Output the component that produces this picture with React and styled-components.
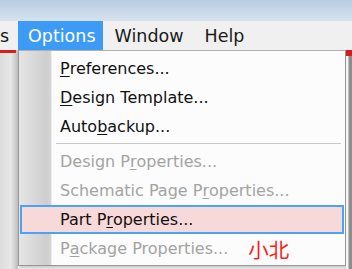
import React from 'react';
import styled, { createGlobalStyle } from 'styled-components';

const GlobalStyle = createGlobalStyle`
  html, body { margin: 0; padding: 0; background: #f0f0f0; }
  body { font-family: "DejaVu Sans", "Noto Sans CJK SC", sans-serif; }
`;

const items = [
  { label: 'Preferences...', key: 0, disabled: false },
  { label: 'Design Template...', key: 0, disabled: false },
  { label: 'Autobackup...', key: 4, disabled: false },
  { sep: true },
  { label: 'Design Properties...', key: 8, disabled: true },
  { label: 'Schematic Page Properties...', key: 16, disabled: true },
  { label: 'Part Properties...', key: 6, disabled: false, active: true },
  { label: 'Package Properties...', key: 1, disabled: true, note: '小北' },
];

const App = () => (
  <>
    <GlobalStyle />
    <Screen>
      <TitleStrip />
      <MenuBar>
        <Stub>s</Stub>
        <BarItem open>Options</BarItem>
        <BarItem>Window</BarItem>
        <BarItem>Help</BarItem>
      </MenuBar>
      <Body>
        <LeftPane>
          <RedLine />
        </LeftPane>
        <Menu>
          {items.map((it, i) =>
            it.sep ? (
              <Separator key={i} />
            ) : (
              <Item key={i} disabled={it.disabled} active={it.active}>
                {it.label.slice(0, it.key)}
                <u>{it.label[it.key]}</u>
                {it.label.slice(it.key + 1)}
                {it.note && <Note>{it.note}</Note>}
              </Item>
            )
          )}
        </Menu>
        <RightEdge />
      </Body>
    </Screen>
  </>
);

const Screen = styled.div`
  width: 352px;
  height: 269px;
  display: flex;
  flex-direction: column;
  overflow: hidden;
  background: #f0f0f0;
`;

const TitleStrip = styled.div`
  height: 21px;
  background: linear-gradient(180deg, #b9cde2, #d6e2ee);
`;

const MenuBar = styled.div`
  height: 29px;
  display: flex;
  align-items: stretch;
  background: #f0f0f0;
  font-size: 17.5px;
`;

const Stub = styled.div`
  width: 18px;
  display: flex;
  align-items: center;
  color: #1a1a1a;
`;

const BarItem = styled.div`
  display: flex;
  align-items: center;
  padding: ${({ open }) => (open ? '0 7px 0 10px' : '0 9px 0 12px')};
  background: ${({ open }) => (open ? '#3d9bf5' : 'transparent')};
  color: ${({ open }) => (open ? '#ffffff' : '#1a1a1a')};
`;

const Body = styled.div`
  flex: 1;
  display: flex;
`;

const LeftPane = styled.div`
  width: 18px;
  background: linear-gradient(90deg, #dcdcdc, #e8e8e8 60%, #bdbdbd);
`;

const RedLine = styled.div`
  height: 3px;
  width: 16px;
  background: #d81e1e;
`;

const Menu = styled.div`
  flex: 1;
  border: 1px solid #979797;
  border-top-color: #b0b0b0;
  margin-bottom: 3px;
  padding: 3px 0 2px;
  background: linear-gradient(
    90deg,
    #e6e6e6 0,
    #cdcdcd 28px,
    #d6d6d6 32px,
    #ffffff 33px,
    #fcfcfc 34px
  );
  box-shadow: 2px 2px 2px rgba(0, 0, 0, 0.15);
`;

const Item = styled.div`
  height: 29px;
  box-sizing: border-box;
  display: flex;
  align-items: center;
  padding-left: 38px;
  margin: 0 1px;
  font-size: 16px;
  white-space: nowrap;
  color: ${({ disabled }) => (disabled ? '#a3a3a3' : '#111111')};
  background: ${({ active }) => (active ? '#f8d9d9' : 'transparent')};
  border: 2px solid ${({ active }) => (active ? '#4aa3f7' : 'transparent')};

  u {
    text-decoration-thickness: 1px;
    text-underline-offset: 2px;
  }
`;

const Note = styled.span`
  margin-left: 20px;
  color: #ff1a1a;
  font-size: 20.5px;
  font-family: "Noto Sans CJK SC", sans-serif;
`;

const Separator = styled.div`
  height: 1px;
  margin: 2px 4px 3px 37px;
  background: #c8c8c8;
`;

const RightEdge = styled.div`
  width: 6px;
  background: linear-gradient(90deg, #f4f4f4 0, #f4f4f4 2px, #8e8e8e 3px, #8e8e8e);
  border-top: 6px solid #d41c1c;
  box-sizing: border-box;
`;

export default App;
